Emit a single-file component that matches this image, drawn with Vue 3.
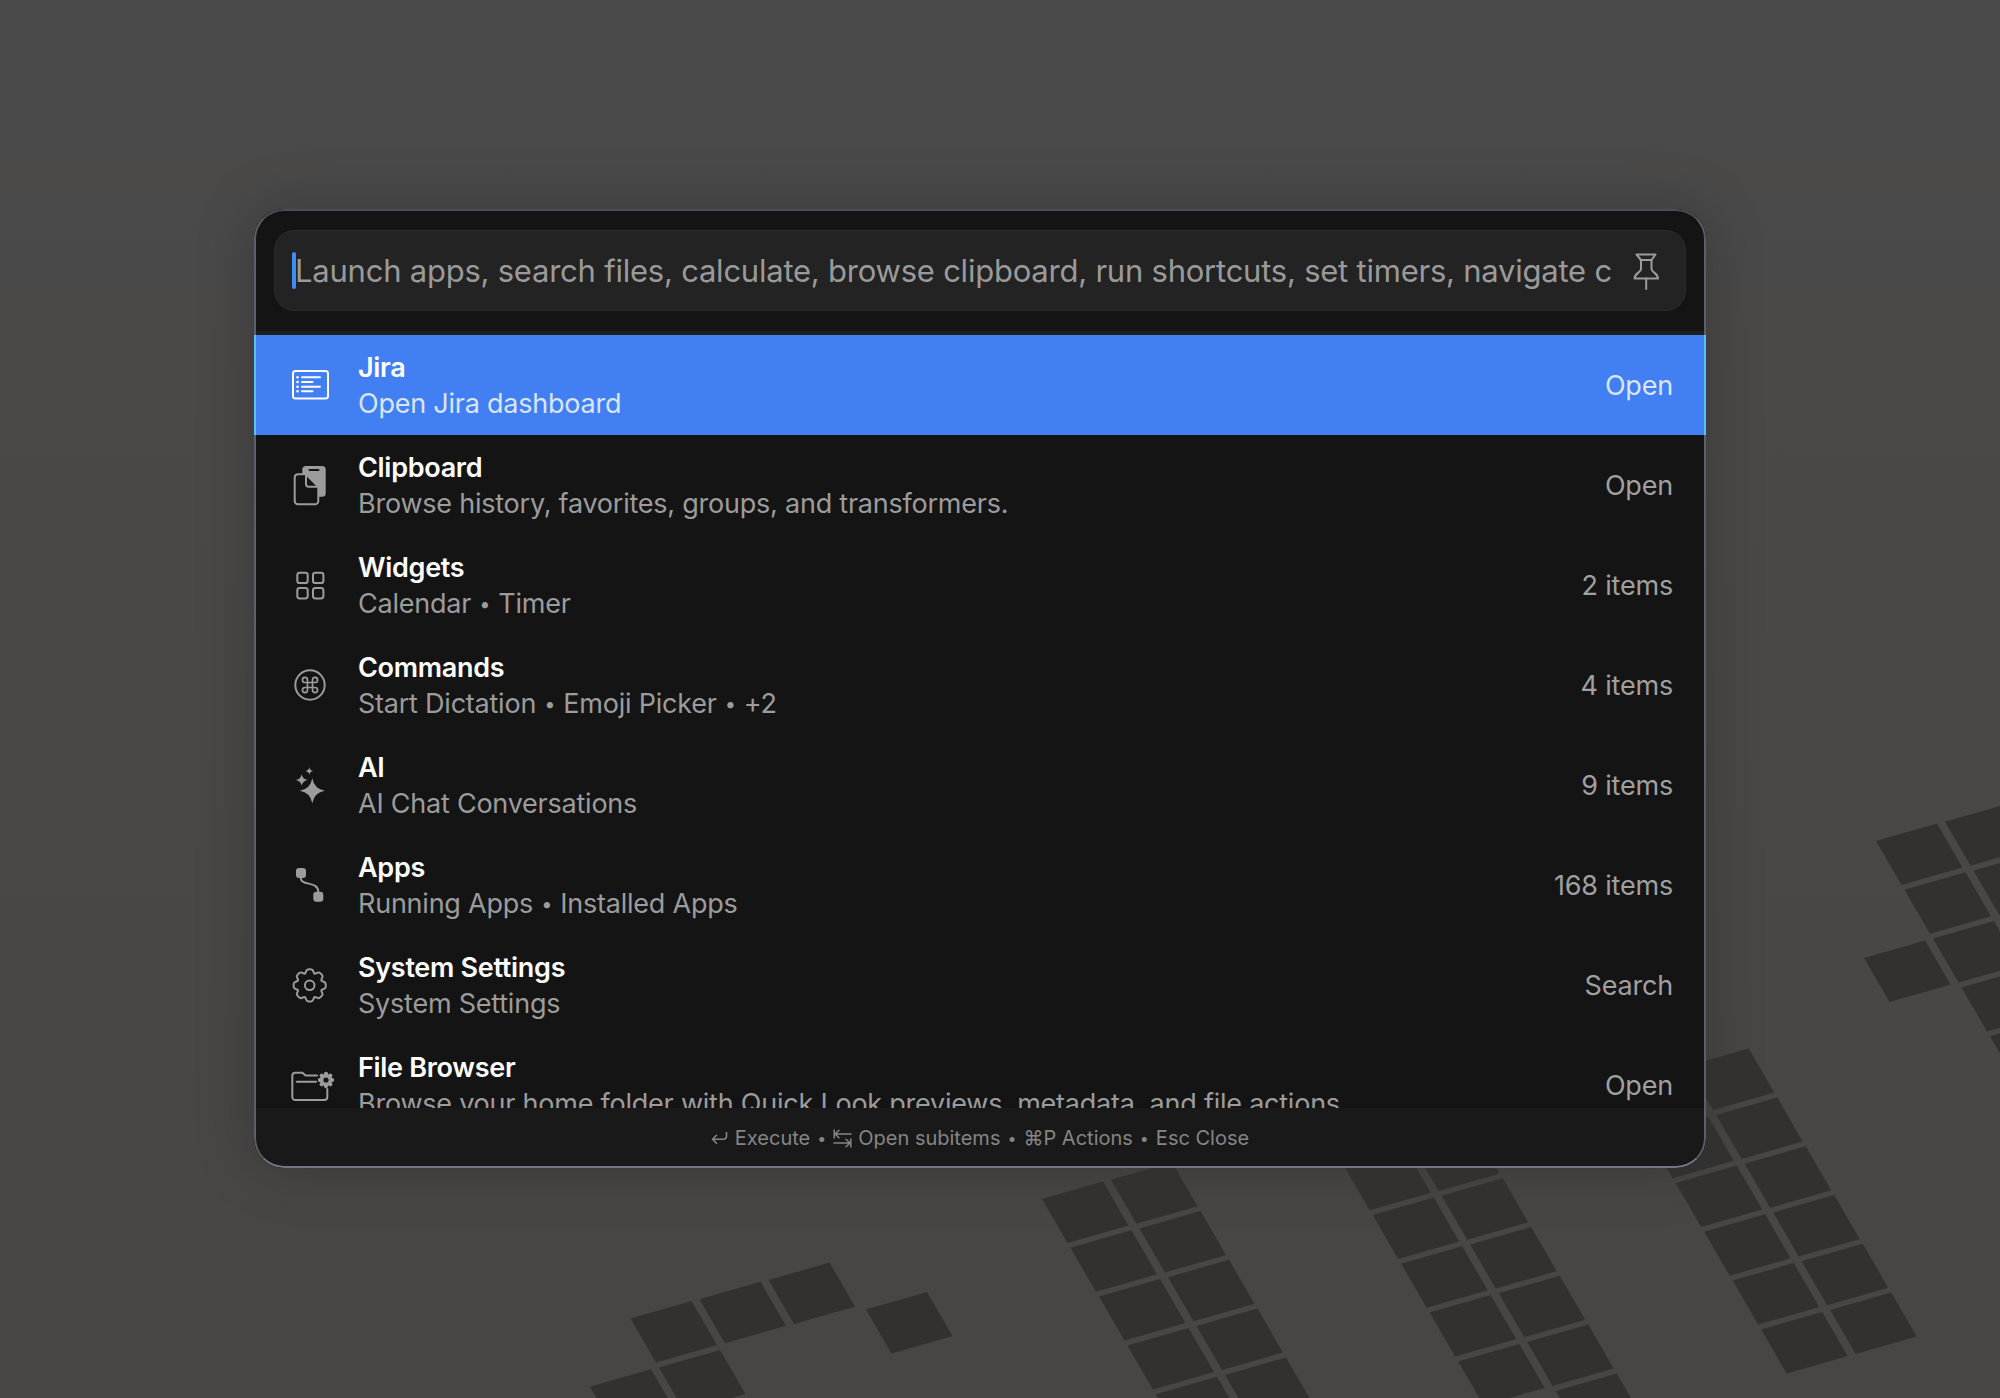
<script setup>
const A = [69, -19.3]
const B = [28.5, 48.8]
const a = [61, -17.5]
const b = [25.5, 44]

const groups = [
  { o: [768.5, 1280], cells: [[0,0],[-1,0],[-2,0],[-2,1],[-3,1],[-2,2],[1,1]] },
  { o: [1042, 1199], cells: [[0,0],[0,1],[0,2],[0,3],[0,4],[1,0],[1,1],[1,2],[1,3],[1,4]] },
  { o: [1372.7, 1215], cells: [[0,-1],[0,0],[0,1],[0,2],[0,3],[1,-1],[1,0],[1,1],[1,2],[1,3],[1,4]] },
  { o: [1675.7, 1183], cells: [[0,-2],[0,-1],[0,0],[0,1],[0,2],[0,3],[1,-2],[1,-1],[1,0],[1,1],[1,2],[1,3]] },
  { o: [1876, 841], cells: [[0,0],[0,1],[0,2],[0,3],[0,4],[1,0],[1,1],[-1,2]] },
]

const tiles = groups.flatMap(g =>
  g.cells.map(([i, j]) => {
    const x = g.o[0] + i * A[0] + j * B[0]
    const y = g.o[1] + i * A[1] + j * B[1]
    return [
      [x, y],
      [x + a[0], y + a[1]],
      [x + a[0] + b[0], y + a[1] + b[1]],
      [x + b[0], y + b[1]],
    ].map(p => p.map(n => n.toFixed(1)).join(',')).join(' ')
  })
)

function polar(r, deg, cx, cy) {
  const t = (deg * Math.PI) / 180
  return `${(cx + r * Math.sin(t)).toFixed(2)} ${(cy - r * Math.cos(t)).toFixed(2)}`
}
function gear(cx, cy, R, r, n) {
  const step = 360 / n
  let d = `M${polar(r, -step / 2, cx, cy)}`
  for (let k = 0; k < n; k++) {
    const th = k * step
    d += ` C${polar(r + 1, th - step * 0.3, cx, cy)} ${polar(R, th - step * 0.32, cx, cy)} ${polar(R, th - step * 0.16, cx, cy)}`
    d += ` Q${polar(R + 0.4, th, cx, cy)} ${polar(R, th + step * 0.16, cx, cy)}`
    d += ` C${polar(R, th + step * 0.32, cx, cy)} ${polar(r + 1, th + step * 0.3, cx, cy)} ${polar(r, th + step / 2, cx, cy)}`
  }
  return d + 'Z'
}
const settingsGear = gear(19.7, 20.3, 16, 12.6, 8)
const folderGear = gear(36, 15, 8, 6, 8)

const rows = [
  { icon: 'list', title: 'Jira', sub: ['Open Jira dashboard'], right: 'Open', active: true },
  { icon: 'clip', title: 'Clipboard', sub: ['Browse history, favorites, groups, and transformers.'], right: 'Open' },
  { icon: 'grid', title: 'Widgets', sub: ['Calendar', 'Timer'], right: '2 items' },
  { icon: 'cmd', title: 'Commands', sub: ['Start Dictation', 'Emoji Picker', '+2'], right: '4 items' },
  { icon: 'ai', title: 'AI', sub: ['AI Chat Conversations'], right: '9 items' },
  { icon: 'apps', title: 'Apps', sub: ['Running Apps', 'Installed Apps'], right: '168 items' },
  { icon: 'gear', title: 'System Settings', sub: ['System Settings'], right: 'Search' },
  { icon: 'folder', title: 'File Browser', sub: ['Browse your home folder with Quick Look previews, metadata, and file actions.'], right: 'Open' },
]
</script>

<template>
  <div class="stage">
    <svg class="backdrop" viewBox="0 0 2000 1398" width="2000" height="1398" aria-hidden="true">
      <polygon v-for="(t, i) in tiles" :key="i" :points="t" fill="#333130" />
    </svg>

    <div class="panel">
      <header class="head">
        <div class="search">
          <span class="caret"></span>
          <span class="placeholder">Launch apps, search files, calculate, browse clipboard, run shortcuts, set timers, navigate c</span>
          <svg class="pin" viewBox="0 0 40 40" width="40" height="40" fill="none" stroke="#9c9c9c" stroke-width="2" stroke-linejoin="round" stroke-linecap="round">
            <path d="M10.5 3.5H29.5L25.5 9V18C25.5 21.5 32 22 32 27.5H8.5C8.5 22 15 21.5 15 18V9Z" />
            <path d="M14.5 9H25.5M20.2 27.5V38" />
          </svg>
        </div>
      </header>

      <div class="list">
        <div v-for="row in rows" :key="row.title" class="row" :class="{ active: row.active }">
          <svg class="icon" viewBox="0 0 40 40" width="40" height="40" fill="none" stroke="currentColor" stroke-width="2" stroke-linecap="round" stroke-linejoin="round">
            <template v-if="row.icon === 'list'">
              <rect x="3" y="6" width="35" height="27.5" rx="2.5" />
              <path d="M12 12.2H30M12 17H22.5M12 21.7H30M12 26.3H22.5" />
              <path d="M7.5 12.2h.1M7.5 17h.1M7.5 21.7h.1M7.5 26.3h.1" stroke-width="2.6" />
            </template>
            <template v-else-if="row.icon === 'clip'">
              <rect x="12.3" y="1" width="23.4" height="30.7" rx="3.5" fill="currentColor" stroke="none" />
              <path d="M19.5 5H28.5" stroke="#141414" />
              <path d="M7.7 9.3H16L28.3 21.7V36A3.3 3.3 0 0 1 25 39.3H8A3.3 3.3 0 0 1 4.7 36V12.6A3.3 3.3 0 0 1 7.7 9.3Z" fill="#141414" />
              <path d="M16 9.3V19A2.7 2.7 0 0 0 18.7 21.7H28.3" />
            </template>
            <template v-else-if="row.icon === 'grid'">
              <rect x="7.3" y="7.7" width="10.4" height="10.4" rx="2.4" />
              <rect x="23" y="7.7" width="10.4" height="10.4" rx="2.4" />
              <rect x="7.3" y="23" width="10.4" height="10.4" rx="2.4" />
              <rect x="23" y="23" width="10.4" height="10.4" rx="2.4" />
            </template>
            <template v-else-if="row.icon === 'cmd'">
              <circle cx="20" cy="20" r="14.7" />
              <path transform="translate(20 20) scale(.84) translate(-12 -12)" stroke-width="2" d="M15 6v12a3 3 0 1 0 3-3H6a3 3 0 1 0 3 3V6a3 3 0 1 0-3 3h12a3 3 0 1 0-3-3" />
            </template>
            <template v-else-if="row.icon === 'ai'">
              <g fill="currentColor" stroke="none">
                <path d="M22.3 13.2Q24.2 23.8 34.8 25.7Q24.2 27.6 22.3 38.2Q20.4 27.6 9.8 25.7Q20.4 23.8 22.3 13.2Z" />
                <path d="M11.7 9.2Q12.6 14.1 17.5 15Q12.6 15.9 11.7 20.8Q10.8 15.9 5.9 15Q10.8 14.1 11.7 9.2Z" />
                <path d="M19.3 2.2Q19.9 5.4 23.1 6Q19.9 6.6 19.3 9.8Q18.7 6.6 15.5 6Q18.7 5.4 19.3 2.2Z" />
              </g>
            </template>
            <template v-else-if="row.icon === 'apps'">
              <rect x="6" y="3" width="10" height="10" rx="3" fill="currentColor" stroke="none" />
              <rect x="23.3" y="26.7" width="10" height="10" rx="3" fill="currentColor" stroke="none" />
              <path d="M10.7 13C11 21.5 28.3 15.5 28.3 27" />
            </template>
            <template v-else-if="row.icon === 'gear'">
              <path :d="settingsGear" />
              <circle cx="19.7" cy="20.3" r="4.8" />
            </template>
            <template v-else>
              <path d="M27 10.5H15.5L12.5 7.7H5.3A3 3 0 0 0 2.3 10.7V32A3 3 0 0 0 5.3 35H34.3A3 3 0 0 0 37.3 32V24" />
              <path d="M6.7 16.7H26" />
              <path :d="folderGear" fill="currentColor" stroke="none" />
              <circle cx="36" cy="15" r="2.6" fill="#141414" stroke="none" />
            </template>
          </svg>
          <div class="texts">
            <div class="title">{{ row.title }}</div>
            <div class="sub">
              <template v-for="(part, i) in row.sub" :key="i">
                <span v-if="i > 0" class="bullet"> • </span>{{ part }}
              </template>
            </div>
          </div>
          <div class="right">{{ row.right }}</div>
        </div>
      </div>

      <footer class="foot">
        <svg viewBox="0 0 18 14" width="18" height="14" fill="none" stroke="#858585" stroke-width="1.6" stroke-linecap="round" stroke-linejoin="round">
          <path d="M15.5 1.5V5.2A3 3 0 0 1 12.5 8.2H1.5M5.5 4.2L1.5 8.2L5.5 12.2" />
        </svg>
        <span>Execute</span>
        <span class="dot">•</span>
        <svg viewBox="0 0 19 19" width="19" height="19" fill="none" stroke="#858585" stroke-width="1.5" stroke-linecap="round" stroke-linejoin="round">
          <path d="M1.2 1V9M18 5H2M6 1.2L2 5L6 8.8M17.8 10V18M1 14H17M13 10.2L17 14L13 17.8" />
        </svg>
        <span>Open subitems</span>
        <span class="dot">•</span>
        <span>⌘P Actions</span>
        <span class="dot">•</span>
        <span>Esc Close</span>
      </footer>

      <div class="rim"></div>
    </div>
  </div>
</template>

<style scoped>
.stage {
  position: relative;
  width: 2000px;
  height: 1398px;
  box-sizing: border-box;
  padding: 209px 0 0 254px;
  overflow: hidden;
  background: linear-gradient(180deg, #4b4a4a 0%, #494847 50%, #474645 100%);
  font-family: Inter, "DejaVu Sans", sans-serif;
}
.backdrop {
  position: absolute;
  left: 0;
  top: 0;
}
.panel {
  position: relative;
  width: 1452px;
  height: 959px;
  border-radius: 30px;
  background: #141414;
  overflow: hidden;
  display: flex;
  flex-direction: column;
}
.stage::before {
  content: "";
  position: absolute;
  left: 254px;
  top: 209px;
  width: 1452px;
  height: 959px;
  border-radius: 30px;
  box-shadow: 0 0 60px rgba(0, 0, 0, 0.22);
}
.rim {
  position: absolute;
  inset: 0;
  border-radius: 30px;
  border: 2px solid #5b606c;
  border-top-color: #4a4e59;
  border-bottom-color: #707684;
  pointer-events: none;
  z-index: 1;
}
.head {
  flex: none;
  height: 126px;
  box-sizing: border-box;
  padding: 21px 20px 0;
  border-bottom: 4px solid #1e1e1e;
}
.search {
  height: 81px;
  box-sizing: border-box;
  display: flex;
  align-items: center;
  padding: 0 19px 0 17px;
  border: 1.5px solid #2c2c2c;
  border-radius: 20px;
  background: #232323;
}
.caret {
  flex: none;
  width: 4px;
  height: 37px;
  margin-right: -1px;
  border-radius: 2px;
  background: #3f8ef5;
}
.placeholder {
  flex: 1;
  min-width: 0;
  color: #9a9a9a;
  font-size: 31px;
  letter-spacing: -0.23px;
  white-space: nowrap;
  overflow: hidden;
}
.pin {
  flex: none;
  margin-left: 6px;
}
.list {
  flex: none;
  height: 773px;
  overflow: hidden;
}
.row {
  position: relative;
  height: 100px;
  box-sizing: border-box;
  display: flex;
  align-items: center;
  padding: 0 33px 0 36px;
  color: #9c9c9c;
}
.row.active {
  z-index: 2;
  color: #fff;
  background: #417ff2;
  border-left: 2px solid #55c3f8;
  border-right: 2px solid #55c3f8;
  padding: 0 31px 0 34px;
}
.icon {
  flex: none;
  overflow: visible;
  margin-right: 28px;
}
.texts {
  flex: 1;
  min-width: 0;
  padding-top: 2px;
}
.title {
  color: #fff;
  font-size: 27px;
  letter-spacing: -0.3px;
  line-height: 36px;
  font-weight: 600;
}
.sub {
  color: #9c9c9c;
  font-size: 27px;
  letter-spacing: -0.23px;
  line-height: 36px;
  white-space: nowrap;
}
.bullet {
  font-size: 20px;
  margin: 0 2.7px;
  vertical-align: 2px;
  white-space: pre;
}
.right {
  flex: none;
  font-size: 27px;
  letter-spacing: -0.2px;
  color: #a0a0a0;
}
.active .sub,
.active .right {
  color: #d9e6fd;
}
.foot {
  flex: 1;
  min-height: 0;
  display: flex;
  align-items: center;
  justify-content: center;
  gap: 6px;
  background: #191919;
  color: #858585;
  font-size: 20px;
}
.dot {
  font-size: 16px;
  margin: 0 1px;
}
</style>
